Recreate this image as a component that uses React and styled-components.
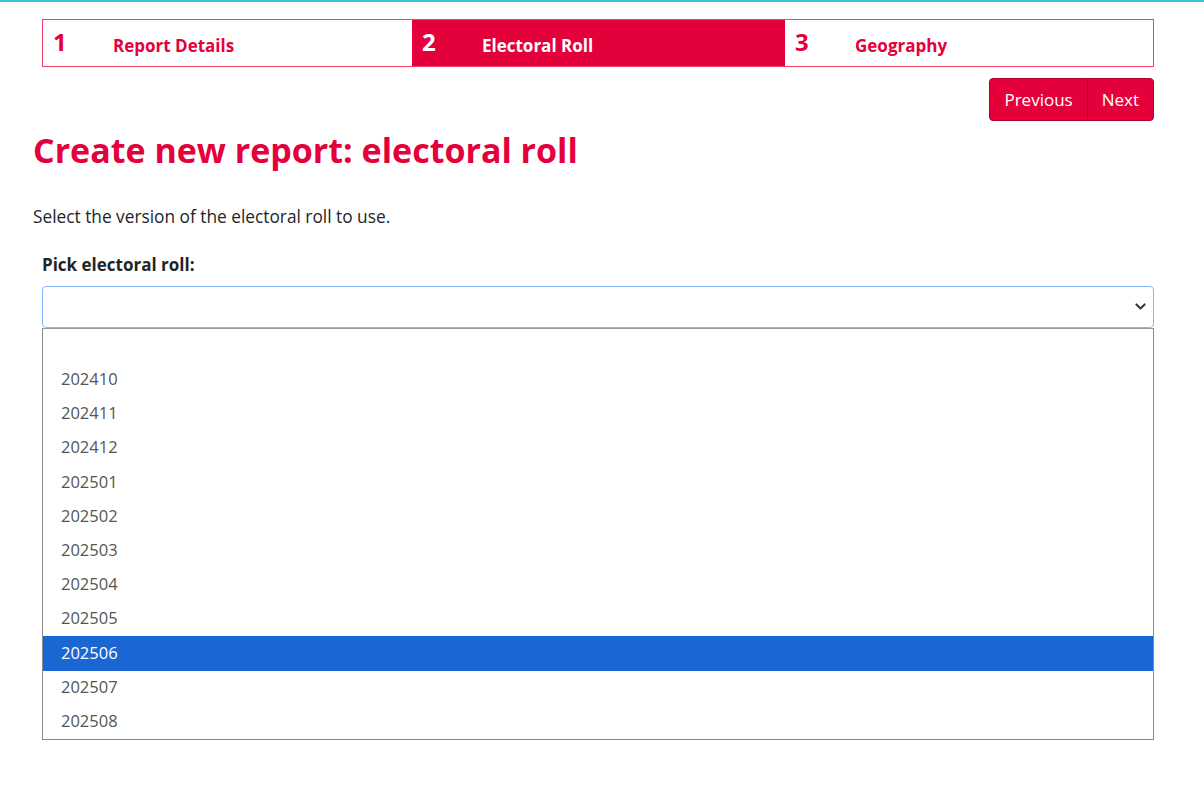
import React from "react";
import styled, { createGlobalStyle } from "styled-components";

const Global = createGlobalStyle`
  html, body { margin: 0; padding: 0; background: #fff; }
  body { font-family: "Open Sans", "Noto Sans", sans-serif; color: #212529; }
`;

const RED = "#e4003b";

const TopLine = styled.div`
  height: 2px;
  background: #3cc3d2;
`;

const Page = styled.div`
  padding: 17px 50px 40px 33px;
`;

const Inset = styled.div`
  padding-left: 9px;
`;

const Stepper = styled.div`
  display: grid;
  grid-template-columns: 369px 373px 1fr;
  border: 1px solid #f0416b;
  height: 46px;
`;

const Step = styled.div`
  display: flex;
  align-items: center;
  background: ${(p) => (p.$active ? RED : "#fff")};
  color: ${(p) => (p.$active ? "#fff" : RED)};
  padding-left: 10px;
`;

const StepNum = styled.span`
  font-size: 24px;
  font-weight: 700;
  width: 60px;
  margin-top: -3px;
`;

const StepLabel = styled.span`
  font-size: 17px;
  font-weight: 700;
  margin-top: 5px;
`;

const NavRow = styled.div`
  display: flex;
  justify-content: flex-end;
  margin-top: 11px;
`;

const BtnGroup = styled.div`
  display: flex;
`;

const Btn = styled.button`
  font-family: inherit;
  font-size: 17px;
  color: #fff;
  background: ${RED};
  border: 1px solid #b0002e;
  height: 43px;
  padding: 0 14px;
  border-radius: ${(p) => (p.$first ? "4px 0 0 4px" : "0 4px 4px 0")};
  margin-left: ${(p) => (p.$first ? "0" : "-1px")};
`;

const Title = styled.h1`
  margin: 9px 0 0;
  font-size: 34px;
  font-weight: 700;
  color: ${RED};
  line-height: 1.2;
`;

const Intro = styled.p`
  margin: 34px 0 0;
  font-size: 17.3px;
  line-height: 24px;
`;

const Label = styled.div`
  margin-top: 24px;
  font-size: 17px;
  font-weight: 700;
  line-height: 24px;
`;

const SelectBox = styled.div`
  margin-top: 9px;
  height: 40px;
  border: 1px solid #86b7fe;
  border-radius: 4px;
  display: flex;
  align-items: center;
  justify-content: flex-end;
  padding-right: 5px;
`;

const List = styled.div`
  border: 1px solid #8a8a8a;
  border-top-color: #9a9a9a;
  background: #fff;
`;

const Option = styled.div`
  height: 34.2px;
  box-sizing: border-box;
  display: flex;
  align-items: center;
  padding: 0 0 3px 18px;
  font-size: 16.5px;
  color: ${(p) => (p.$selected ? "#fff" : "#555")};
  background: ${(p) => (p.$selected ? "#1a66d2" : "transparent")};
`;

const options = ["", "202410", "202411", "202412", "202501", "202502", "202503", "202504", "202505", "202506", "202507", "202508"];

export default function App() {
  return (
    <>
      <Global />
      <TopLine />
      <Page>
        <Inset>
          <Stepper>
            <Step><StepNum>1</StepNum><StepLabel>Report Details</StepLabel></Step>
            <Step $active><StepNum>2</StepNum><StepLabel>Electoral Roll</StepLabel></Step>
            <Step><StepNum>3</StepNum><StepLabel>Geography</StepLabel></Step>
          </Stepper>
          <NavRow>
            <BtnGroup>
              <Btn $first>Previous</Btn>
              <Btn>Next</Btn>
            </BtnGroup>
          </NavRow>
        </Inset>
        <Title>Create new report: electoral roll</Title>
        <Intro>Select the version of the electoral roll to use.</Intro>
        <Inset>
          <Label>Pick electoral roll:</Label>
          <SelectBox>
            <svg width="15" height="11" viewBox="0 0 16 16">
              <path d="M2 5l6 6 6-6" fill="none" stroke="#343a40" strokeWidth="3" strokeLinecap="round" strokeLinejoin="round" />
            </svg>
          </SelectBox>
          <List>
            {options.map((o, i) => (
              <Option key={i} $selected={o === "202506"}>{o}</Option>
            ))}
          </List>
        </Inset>
      </Page>
    </>
  );
}
